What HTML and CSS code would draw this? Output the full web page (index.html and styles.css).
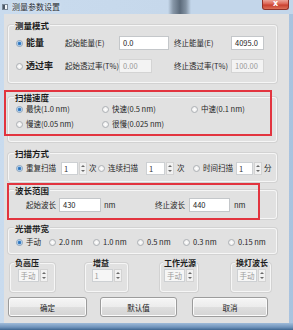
FILE: index.html
```html
<!DOCTYPE html>
<html lang="zh-CN">
<head>
<meta charset="utf-8">
<title>测量参数设置</title>
<link rel="stylesheet" href="styles.css">
</head>
<body>
<div class="window">
  <div class="titlebar">
    <span class="app-icon"></span>
    <span class="title">测量参数设置</span>
    <span class="close">x</span>
  </div>
  <div class="client">
    <section class="group g1">
      <div class="legend">测量模式</div>
      <div class="row r1">
        <span class="opt big c-mode"><span class="radio on"></span>能量</span>
        <span class="lbl c-lab1">起始能量(E)</span>
        <span class="c-in1"><span class="input w50">0.0</span></span>
        <span class="lbl c-lab2">终止能量(E)</span>
        <span class="input w33">4095.0</span>
      </div>
      <div class="row r2">
        <span class="opt big c-mode"><span class="radio"></span>透过率</span>
        <span class="lbl c-lab1">起始透过率(T%)</span>
        <span class="c-in1"><span class="input w33 disabled">0.00</span></span>
        <span class="lbl c-lab2">终止透过率(T%)</span>
        <span class="input w33 disabled">100.00</span>
      </div>
    </section>

    <section class="group g2">
      <div class="legend">扫描速度</div>
      <div class="row">
        <span class="opt s1"><span class="radio on"></span>最快(1.0 nm)</span>
        <span class="opt s2"><span class="radio"></span>快速(0.5 nm)</span>
        <span class="opt"><span class="radio"></span>中速(0.1 nm)</span>
      </div>
      <div class="row r-gap1">
        <span class="opt s1"><span class="radio"></span>慢速(0.05 nm)</span>
        <span class="opt s2"><span class="radio"></span>很慢(0.025 nm)</span>
      </div>
    </section>

    <section class="group g3">
      <div class="legend">扫描方式</div>
      <div class="row">
        <span class="opt m1"><span class="radio on"></span>重复扫描</span>
        <span class="spin w26"><span class="sp-val">1</span><span class="sp-arr"></span></span>
        <span class="unit u1">次</span>
        <span class="opt m2"><span class="radio"></span>连续扫描</span>
        <span class="spin w28"><span class="sp-val">1</span><span class="sp-arr"></span></span>
        <span class="unit u2">次</span>
        <span class="opt m3"><span class="radio"></span>时间扫描</span>
        <span class="spin w26"><span class="sp-val">1</span><span class="sp-arr"></span></span>
        <span class="unit u3">分</span>
      </div>
    </section>

    <section class="group g4">
      <div class="legend">波长范围</div>
      <div class="row r-wl">
        <span class="lbl">起始波长</span>
        <span class="input w42 ml3">430</span>
        <span class="unit nm1">nm</span>
        <span class="lbl">终止波长</span>
        <span class="input w41 ml4">440</span>
        <span class="unit nm2">nm</span>
      </div>
    </section>

    <section class="group g5">
      <div class="legend">光谱带宽</div>
      <div class="row">
        <span class="opt b1"><span class="radio on"></span>手动</span>
        <span class="opt b2"><span class="radio"></span>2.0 nm</span>
        <span class="opt b2"><span class="radio"></span>1.0 nm</span>
        <span class="opt b3"><span class="radio"></span>0.5 nm</span>
        <span class="opt b4"><span class="radio"></span>0.3 nm</span>
        <span class="opt"><span class="radio"></span>0.15 nm</span>
      </div>
    </section>

    <div class="mini-row">
      <section class="group mini mini-neg">
        <div class="legend">负高压</div>
        <div class="mini-body"><span class="spin w30 dis"><span class="sp-val">手动</span><span class="sp-arr"></span></span></div>
      </section>
      <section class="group mini mini-gain">
        <div class="legend">增益</div>
        <div class="mini-body"><span class="spin w30 dis"><span class="sp-val">1</span><span class="sp-arr"></span></span></div>
      </section>
      <section class="group mini mini-src">
        <div class="legend">工作光源</div>
        <div class="mini-body"><span class="spin w30 dis"><span class="sp-val">手动</span><span class="sp-arr"></span></span></div>
      </section>
      <section class="group mini mini-lamp">
        <div class="legend">换灯波长</div>
        <div class="mini-body"><span class="spin w29 dis"><span class="sp-val">手动</span><span class="sp-arr"></span></span></div>
      </section>
    </div>

    <div class="buttons">
      <button class="btn btn-ok">确定</button>
      <button class="btn btn-def">默认值</button>
      <button class="btn btn-cancel">取消</button>
    </div>
  </div>
  <div class="frame-bottom"></div>

  <div class="mark mark-speed"></div>
  <div class="mark mark-wl"></div>
</div>
</body>
</html>
```

FILE: styles.css
```css
* { box-sizing: border-box; }

html, body {
  margin: 0;
  padding: 0;
}

body {
  width: 293px;
  height: 330px;
  overflow: hidden;
  font-family: "Noto Sans CJK SC", "Noto Sans", sans-serif;
  font-size: 7.5px;
  color: #262626;
}

.window {
  position: relative;
  width: 293px;
  height: 330px;
  display: flex;
  flex-direction: column;
  background: linear-gradient(90deg, #c9dbee 0, #bcd1e8 50%, #a9c3df 100%);
}

/* ---------- title bar ---------- */
.titlebar {
  height: 14px;
  flex: none;
  display: flex;
  align-items: flex-start;
  padding-left: 2px;
  background: linear-gradient(90deg,
    #c9dbee 0, #c6d8eb 168px, #8797a8 173px, #5c6b7b 180px,
    #8393a4 186px, #c3d6ea 191px, #c3d6ea 100%);
}

.app-icon {
  width: 6px;
  height: 6px;
  margin-top: 4px;
  border: 1px solid #7a8796;
  background: linear-gradient(90deg, #4a5868 0 50%, #f4f7fa 50%);
}

.title {
  margin-left: 4px;
  font-size: 8px;
  line-height: 14px;
  color: #2b2f36;
  text-shadow: 0 0 3px #eef4fb;
}

.close {
  margin-left: auto;
  margin-right: 4px;
  width: 27px;
  height: 10px;
  border: 1px solid #8f3128;
  border-top: none;
  border-radius: 0 0 3px 3px;
  background: linear-gradient(180deg, #eba498 0, #dc6252 45%, #c8402f 55%, #dd7058 100%);
  color: #ffffff;
  font-family: "DejaVu Sans", sans-serif;
  font-weight: bold;
  font-size: 8px;
  line-height: 8px;
  text-align: center;
}

/* ---------- client area ---------- */
.client {
  flex: none;
  height: 309px;
  margin: 0 4px;
  padding: 11px 12px 0 4px;
  background: #e1e1e1;
  display: flex;
  flex-direction: column;
}

.frame-bottom {
  flex: 1;
  background: linear-gradient(180deg, #9fbbd9 0, #6f93bb 60%, #3f6690 100%);
}

/* ---------- group boxes ---------- */
.group {
  flex: none;
  display: flex;
  flex-direction: column;
  border: 1px solid #f6f6f6;
  border-radius: 3px;
  box-shadow: 0 0 0 1px #d2d2d2;
}

.legend {
  align-self: flex-start;
  height: 10px;
  margin: -6px 0 0 5px;
  padding: 0 1px;
  background: #e1e1e1;
  font-size: 8.5px;
  line-height: 10px;
  font-weight: bold;
  color: #1c1c1c;
  white-space: nowrap;
}

.row {
  height: 14px;
  display: flex;
  align-items: center;
  padding-left: 7px;
  white-space: nowrap;
  line-height: 14px;
}

.g1 { height: 58px; }
.g1 .r1 { margin-top: 6px; }
.g1 .r2 { margin-top: 9px; }

.g2 { height: 45px; margin-top: 14px; }
.g2 .r-gap1 { margin-top: 1px; }

.g3 { height: 29px; margin-top: 11px; }
.g3 .row { margin-top: 3px; }

.g4 { height: 29px; margin-top: 8px; }
.g4 .row { margin-top: 3px; padding-left: 17px; }

.g5 { height: 26px; margin-top: 9px; }
.g5 .row { margin-top: 2px; }

/* ---------- options / radio ---------- */
.opt {
  display: flex;
  align-items: center;
  flex: none;
}

.radio {
  width: 7px;
  height: 7px;
  margin-right: 3px;
  border-radius: 50%;
  border: 1px solid #aeb2b6;
  background: radial-gradient(circle at 50% 50%, #ffffff 0, #e6e6e6 100%);
  flex: none;
}

.radio.on {
  border-color: #8aa2bb;
  background: radial-gradient(circle at 50% 50%, #2b6cb0 0, #3f86cc 1.4px, #c5dcf2 2.2px, #f3f6f9 100%);
}

.big {
  font-size: 9px;
  font-weight: bold;
  color: #1a1a1a;
}

.c-mode { width: 49px; }
.c-lab1 { width: 54px; }
.c-in1 { width: 55px; display: flex; }
.c-lab2 { width: 57px; }

.lbl { flex: none; }

.s1 { width: 86px; }
.s2 { width: 89px; }

.m1 { width: 45px; }
.m2 { width: 48px; }
.m3 { width: 43px; }

.b1 { width: 33px; }
.b2 { width: 44px; }
.b3 { width: 46px; }
.b4 { width: 45px; }

/* ---------- inputs ---------- */
.input {
  flex: none;
  height: 14px;
  padding-left: 3px;
  background: #ffffff;
  border: 1px solid #c4c7ca;
  line-height: 12px;
  font-size: 7.5px;
  color: #1e1e1e;
}

.input.disabled {
  background: #f3f3f3;
  border-color: #d4d4d4;
  color: #9a9a9a;
}

.w50 { width: 50px; }
.w33 { width: 33px; }
.w42 { width: 42px; }
.w41 { width: 41px; }
.ml3 { margin-left: 3px; }
.ml4 { margin-left: 4px; }

.unit { flex: none; }
.u1 { width: 11px; padding-left: 2px; }
.u2 { width: 19px; padding-left: 3px; }
.u3 { padding-left: 2px; }
.nm1 { width: 54px; padding-left: 3px; }
.nm2 { padding-left: 4px; }

/* ---------- spinners ---------- */
.spin {
  flex: none;
  height: 13px;
  display: flex;
}

.w26 { width: 26px; }
.w28 { width: 28px; }
.w29 { width: 29px; }
.w30 { width: 30px; }

.sp-val {
  flex: 1;
  min-width: 0;
  padding-left: 2px;
  background: #ffffff;
  border: 1px solid #cdd0d3;
  line-height: 11px;
  font-size: 7.5px;
  color: #333333;
  white-space: nowrap;
  overflow: hidden;
}

.sp-arr {
  position: relative;
  flex: none;
  width: 8px;
  margin-left: 1px;
  background: #f1f1f1;
  border: 1px solid #d3d3d3;
}

.sp-arr::before,
.sp-arr::after {
  content: "";
  position: absolute;
  left: 1px;
  border-left: 2px solid transparent;
  border-right: 2px solid transparent;
}

.sp-arr::before {
  top: 2px;
  border-bottom: 2px solid #6a6a6a;
}

.sp-arr::after {
  bottom: 2px;
  border-top: 2px solid #6a6a6a;
}

.spin.dis .sp-val {
  background: #f6f6f6;
  color: #9c9c9c;
}

/* ---------- mini groups ---------- */
.mini-row {
  display: flex;
  margin-top: 9px;
  height: 29px;
}

.mini {
  height: 29px;
}

.mini-body {
  display: flex;
  justify-content: center;
  margin-top: 1px;
}

.mini .legend {
  font-size: 8px;
  margin-left: 3px;
}

.mini-neg { width: 45px; margin-left: 2px; }
.mini-gain { width: 43px; margin-left: 30px; }
.mini-gain .legend { margin-left: 6px; }
.mini-src { width: 38px; margin-left: 32px; }
.mini-src .legend { margin-left: 2px; }
.mini-lamp { width: 40px; margin-left: 33px; }
.mini-lamp .legend { margin-left: 3px; }

/* ---------- buttons ---------- */
.buttons {
  display: flex;
  margin-top: 5px;
}

.btn {
  height: 20px;
  padding: 0;
  border: 1px solid #9c9c9c;
  border-radius: 3px;
  background: linear-gradient(180deg, #f6f6f6 0, #ececec 48%, #dedede 52%, #d4d4d4 100%);
  box-shadow: inset 0 0 0 1px #fbfbfb;
  font-family: "Noto Sans CJK SC", sans-serif;
  font-size: 7.5px;
  color: #222222;
}

.btn-ok { width: 79px; }
.btn-def { width: 77px; margin-left: 13px; }
.btn-cancel { width: 76px; margin-left: 15px; }

/* ---------- red annotation marks ---------- */
.mark {
  position: absolute;
  border: 2px solid #e2343f;
}

.mark-speed {
  left: 4px;
  top: 90px;
  width: 268px;
  height: 46px;
}

.mark-wl {
  left: 7px;
  top: 183px;
  width: 253px;
  height: 37px;
}
```
